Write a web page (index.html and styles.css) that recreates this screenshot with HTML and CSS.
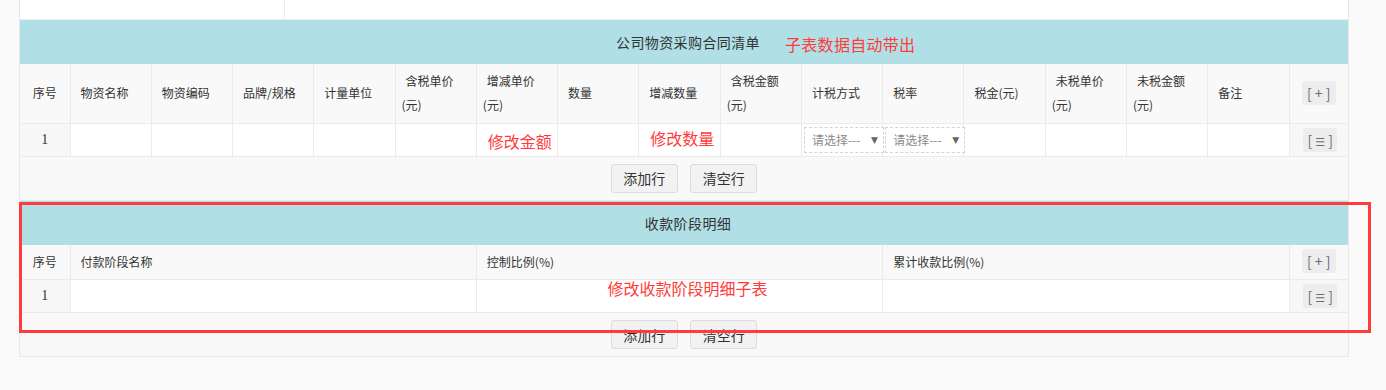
FILE: index.html
```html
<!DOCTYPE html>
<html lang="zh-CN">
<head>
  <meta charset="UTF-8">
  <title>合同子表</title>
  <link rel="stylesheet" href="styles.css">
</head>
<body>

  <div class="form">
    <div class="top-row">
      <div class="top-cell"></div>
      <div class="top-cell"></div>
    </div>

    <!-- 物资清单 -->
    <section class="sub">
      <div class="sub-title">
        <span class="title-text">公司物资采购合同清单<span class="note note-title">子表数据自动带出</span></span>
      </div>
      <table class="grid">
        <colgroup>
          <col class="col-idx">
          <col><col><col><col><col><col><col><col><col><col><col><col><col><col><col>
          <col class="col-op">
        </colgroup>
        <thead>
          <tr class="head-tall">
            <th class="idx">序号</th>
            <th>物资名称</th>
            <th>物资编码</th>
            <th>品牌/规格</th>
            <th>计量单位</th>
            <th>含税单价(元)</th>
            <th>增减单价(元)</th>
            <th>数量</th>
            <th>增减数量</th>
            <th>含税金额(元)</th>
            <th>计税方式</th>
            <th>税率</th>
            <th>税金(元)</th>
            <th>未税单价(元)</th>
            <th>未税金额(元)</th>
            <th>备注</th>
            <th class="op"><span class="op-btn">[ + ]</span></th>
          </tr>
        </thead>
        <tbody>
          <tr>
            <td class="idx">1</td>
            <td></td>
            <td></td>
            <td></td>
            <td></td>
            <td></td>
            <td><span class="note note-cell">修改金额</span></td>
            <td></td>
            <td><span class="note note-cell note-up">修改数量</span></td>
            <td></td>
            <td class="sel-cell"><div class="fake-select">请选择---<span class="arrow">▼</span></div></td>
            <td class="sel-cell"><div class="fake-select">请选择---<span class="arrow">▼</span></div></td>
            <td></td>
            <td></td>
            <td></td>
            <td></td>
            <td class="op"><span class="op-btn op-menu">[ <span class="menu-glyph">☰</span> ]</span></td>
          </tr>
        </tbody>
      </table>
      <div class="sub-foot">
        <button class="btn">添加行</button>
        <button class="btn">清空行</button>
      </div>
    </section>

    <!-- 收款阶段 -->
    <section class="sub">
      <div class="sub-title">
        <span class="title-text">收款阶段明细</span>
      </div>
      <table class="grid">
        <colgroup>
          <col class="col-idx">
          <col><col><col>
          <col class="col-op">
        </colgroup>
        <thead>
          <tr class="head-short">
            <th class="idx">序号</th>
            <th>付款阶段名称</th>
            <th>控制比例(%)</th>
            <th>累计收款比例(%)</th>
            <th class="op"><span class="op-btn">[ + ]</span></th>
          </tr>
        </thead>
        <tbody>
          <tr>
            <td class="idx">1</td>
            <td></td>
            <td class="note-host"><span class="note note-stage">修改收款阶段明细子表</span></td>
            <td></td>
            <td class="op"><span class="op-btn op-menu">[ <span class="menu-glyph">☰</span> ]</span></td>
          </tr>
        </tbody>
      </table>
      <div class="sub-foot">
        <button class="btn">添加行</button>
        <button class="btn">清空行</button>
      </div>
    </section>
  </div>

  <div class="mark-box"></div>

</body>
</html>
```

FILE: styles.css
```css
* {
  margin: 0;
  padding: 0;
  box-sizing: border-box;
}
body {
  font-family: "Noto Sans CJK SC", "Liberation Sans", sans-serif;
  font-size: 12px;
  color: #333;
  background-color: #fafafa;
  position: relative;
}
.form {
  width: 1330px;
  margin-left: 19px;
  border-left: 1px solid #e8e8e8;
  border-right: 1px solid #e8e8e8;
  border-bottom: 1px solid #e8e8e8;
  background-color: #f9f9f9;
}
.top-row {
  display: flex;
  height: 20px;
  background: #fff;
  border-bottom: 1px solid #ececec;
}
.top-cell {
  width: 265px;
  border-right: 1px solid #ececec;
}
.top-cell + .top-cell {
  flex: 1;
  border-right: none;
}
.sub-title {
  height: 44px;
  background-color: #b0dfe5;
  text-align: center;
  font-size: 14px;
  line-height: 44px;
  color: #333;
}
.title-text {
  position: relative;
  display: inline-block;
  padding-left: 8px;
  letter-spacing: 0.4px;
}
.note {
  color: #ff3b3b;
  font-size: 16px;
  white-space: nowrap;
}
.note-title {
  position: absolute;
  left: 100%;
  top: 2px;
  margin-left: 25px;
  letter-spacing: 0.3px;
}
.grid {
  width: 100%;
  border-collapse: collapse;
  table-layout: fixed;
}
.col-idx {
  width: 50px;
}
.col-op {
  width: 59px;
}
.grid th,
.grid td {
  border: 1px solid #ebebeb;
  padding: 0 10px;
  text-align: left;
  font-weight: normal;
  vertical-align: middle;
}
.grid th {
  padding: 0 4px 0 6px;
  text-indent: 4px;
}
.grid tr > :first-child {
  border-left: none;
}
.grid tr > :last-child {
  border-right: none;
}
.grid thead tr:first-child > * {
  border-top: none;
}
.grid th {
  background-color: #f9f9f9;
  line-height: 24px;
}
.head-tall th {
  height: 59px;
}
.head-short th {
  height: 35px;
}
.grid td {
  background: #fff;
  height: 33px;
  line-height: 18px;
}
.grid .idx {
  text-align: center;
  padding: 0;
  text-indent: 0;
}
.grid td.idx {
  background-color: #f8f7f7;
  font-family: "Liberation Serif", serif;
  font-size: 14px;
}
.grid .op {
  text-align: center;
  padding: 0;
  text-indent: 0;
}
.grid td.op {
  background-color: #f7f7f7;
}
.op-btn {
  display: inline-block;
  width: 34px;
  height: 24px;
  line-height: 24px;
  border-radius: 3px;
  background-color: #ededed;
  color: #6b6b73;
  font-size: 14px;
  white-space: pre;
}
.op-menu {
  margin-left: 3px;
}
.menu-glyph {
  font-family: "DejaVu Sans", sans-serif;
  font-size: 11px;
}
.note-cell {
  position: relative;
  top: 2px;
  left: 1px;
}
.note-up {
  top: -1px;
}
.sel-cell {
  padding: 0 !important;
  overflow: visible;
}
.fake-select {
  position: relative;
  width: 80px;
  height: 26px;
  margin-left: 2px;
  border: 1px dashed #d4d4d4;
  padding-left: 7px;
  line-height: 24px;
  color: #8a8a8a;
  background: #fff;
}
.arrow {
  position: absolute;
  right: 5px;
  top: 0;
  font-size: 9px;
  color: #666;
  font-family: "DejaVu Sans", sans-serif;
}
.note-host {
  vertical-align: top !important;
  text-align: center !important;
  padding-left: 26px !important;
}
.note-stage {
  position: relative;
  top: -1px;
}
.sub-foot {
  height: 44px;
  padding-top: 7px;
  text-align: center;
  border-bottom: 1px solid #e8e8e8;
  background-color: #f9f9f9;
}
.sub:last-child .sub-foot {
  border-bottom: none;
  height: 43px;
}
.btn {
  width: 67px;
  height: 29px;
  margin: 0 5px;
  border: 1px solid #dcdcdc;
  border-radius: 3px;
  background-color: #f2f2f2;
  color: #333;
  font-family: "Noto Sans CJK SC", sans-serif;
  font-size: 14px;
}
.mark-box {
  position: absolute;
  left: 19px;
  top: 202px;
  width: 1352px;
  height: 131px;
  border: 3px solid #ff3b3b;
}
```
